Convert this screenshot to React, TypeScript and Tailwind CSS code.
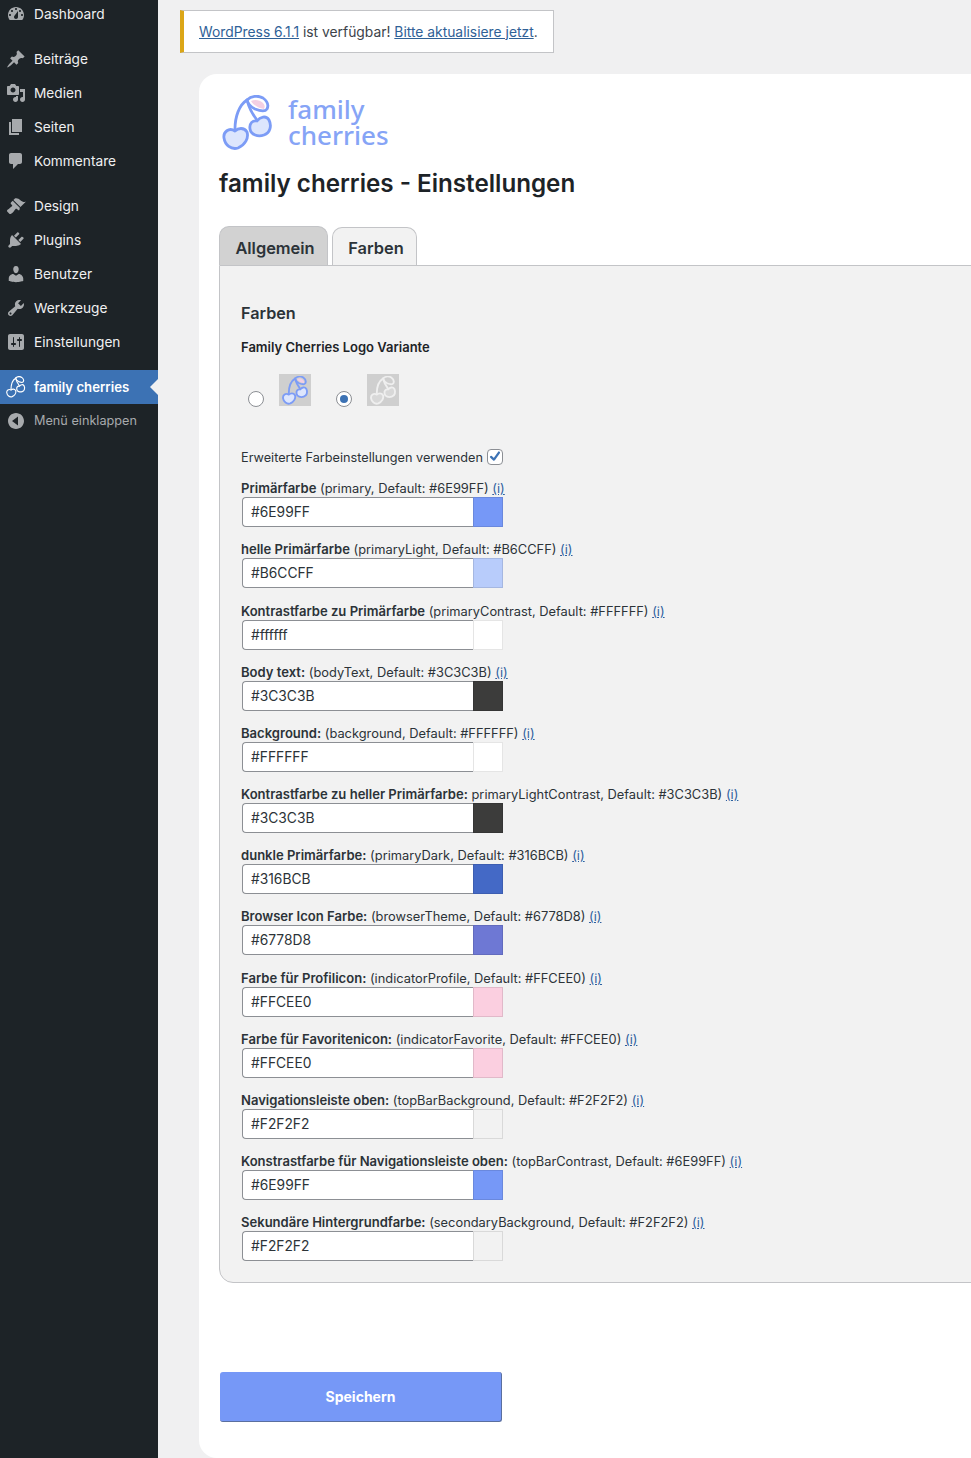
import React from "react";

const iconPaths: Record<string, string> = {
  dashboard: "M3.76 16h12.48c1.1-1.37 1.76-3.11 1.76-5 0-4.42-3.58-8-8-8s-8 3.58-8 8c0 1.89.66 3.63 1.76 5zM10 4c.55 0 1 .45 1 1s-.45 1-1 1-1-.45-1-1 .45-1 1-1zM6 6c.55 0 1 .45 1 1s-.45 1-1 1-1-.45-1-1 .45-1 1-1zm8 0c.55 0 1 .45 1 1s-.45 1-1 1-1-.45-1-1 .45-1 1-1zm-5.37 5.55L12 7v6c0 1.1-.9 2-2 2s-2-.9-2-2c0-.57.24-1.08.63-1.45zM4 10c.55 0 1 .45 1 1s-.45 1-1 1-1-.45-1-1 .45-1 1-1zm12 0c.55 0 1 .45 1 1s-.45 1-1 1-1-.45-1-1 .45-1 1-1z",
  post: "M10.44 3.02l1.82-1.82 6.36 6.35-1.83 1.82c-1.05-.68-2.48-.57-3.41.36l-.75.75c-.92.93-1.04 2.35-.35 3.41l-1.83 1.82-2.41-2.41-2.8 2.79c-.42.42-3.38 2.71-3.8 2.29s1.86-3.39 2.28-3.81l2.79-2.79L4.1 9.36l1.83-1.82c1.05.69 2.48.57 3.4-.36l.75-.75c.93-.92 1.05-2.35.36-3.41z",
  media: "M13 11V4c0-.55-.45-1-1-1h-1.67L9 1H5L3.67 3H2c-.55 0-1 .45-1 1v7c0 .55.45 1 1 1h10c.55 0 1-.45 1-1zM7 4.5c1.38 0 2.5 1.12 2.5 2.5S8.38 9.5 7 9.5 4.5 8.38 4.5 7 5.62 4.5 7 4.5zM14 6h5v10.5c0 1.38-1.12 2.5-2.5 2.5S14 17.88 14 16.5s1.12-2.5 2.5-2.5c.17 0 .34.02.5.05V9h-3V6zm-4 8.05V13h2v3.5c0 1.38-1.12 2.5-2.5 2.5S7 17.88 7 16.5 8.12 14 9.5 14c.17 0 .34.02.5.05z",
  page: "M6 15V2h10v13H6zm-1 1h8v2H3V5h2v11z",
  comments: "M5 2h9c1.1 0 2 .9 2 2v7c0 1.1-.9 2-2 2h-2l-5 5v-5H5c-1.1 0-2-.9-2-2V4c0-1.1.9-2 2-2z",
  design: "M14.48 11.06L7.41 3.99l1.5-1.5c.5-.56 2.3-.47 3.51.32 1.21.8 1.43 1.28 2.91 2.1 1.18.64 2.45 1.26 4.45.85zm-.71.71L6.7 4.7 4.93 6.47c-.39.39-.39 1.02 0 1.41l1.06 1.06c.39.39.39 1.03 0 1.42-.6.6-1.43 1.11-2.21 1.69-.35.26-.7.53-1.01.84C1.43 13.23.4 14.81 1.2 15.6l2.12 2.12c.79.8 2.37-.23 3.71-1.57.31-.31.58-.66.84-1.01.58-.78 1.09-1.61 1.69-2.21.39-.39 1.03-.39 1.42 0l1.06 1.06c.39.39 1.02.39 1.41 0z",
  plugins: "M13.11 4.36L9.87 7.6 8 5.73l3.24-3.24c.35-.34 1.05-.2 1.56.32.52.51.66 1.21.31 1.55zm-8 1.77l.91-1.12 9.01 9.01-1.19.84c-.71.71-2.63 1.16-3.82 1.16H6.14L4.9 17.26c-.59.59-1.54.59-2.12 0-.59-.58-.59-1.53 0-2.12l1.24-1.24v-3.88c0-1.13.4-3.19 1.09-3.89zm7.26 3.97l3.24-3.24c.34-.35 1.04-.21 1.55.31.52.51.66 1.21.31 1.55l-3.24 3.25z",
  users: "M10 9.25c-2.27 0-2.73-3.44-2.73-3.44C7 4.02 7.82 2 9.97 2c2.16 0 2.98 2.02 2.71 3.81 0 0-.41 3.44-2.68 3.44zm0 2.57L12.72 10c2.39 0 4.52 2.33 4.52 4.53v2.49s-3.65 1.13-7.24 1.13c-3.65 0-7.24-1.13-7.24-1.13v-2.49c0-2.25 1.94-4.48 4.47-4.48z",
  tools: "M16.68 9.77c-1.34 1.34-3.3 1.67-4.95.99l-5.41 6.52c-.99.99-2.59.99-3.58 0s-.99-2.59 0-3.57l6.52-5.42c-.68-1.65-.35-3.61.99-4.95 1.28-1.28 3.12-1.62 4.72-1.06l-2.89 2.89 2.82 2.82 2.86-2.87c.53 1.58.18 3.39-1.08 4.65zM3.81 16.21c.4.39 1.04.39 1.43 0 .4-.4.4-1.04 0-1.43-.39-.4-1.03-.4-1.43 0-.39.39-.39 1.03 0 1.43z",
  settings: "M18 16V4c0-1.1-.9-2-2-2H4c-1.1 0-2 .9-2 2v12c0 1.1.9 2 2 2h12c1.1 0 2-.9 2-2zM8 11h1c.55 0 1 .45 1 1s-.45 1-1 1H8v1.5c0 .28-.22.5-.5.5s-.5-.22-.5-.5V13H6c-.55 0-1-.45-1-1s.45-1 1-1h1V5.5c0-.28.22-.5.5-.5s.5.22.5.5V11zm5-2h-1c-.55 0-1-.45-1-1s.45-1 1-1h1V5.5c0-.28.22-.5.5-.5s.5.22.5.5V7h1c.55 0 1 .45 1 1s-.45 1-1 1h-1v5.5c0 .28-.22.5-.5.5s-.5-.22-.5-.5V9z",
  collapse: "M18 10c0-4.42-3.58-8-8-8s-8 3.58-8 8 3.58 8 8 8 8-3.58 8-8zm-6 4.5L6 10l6-4.5v9z",
};

function Dashicon({ name }: { name: string }) {
  return (
    <svg viewBox="0 0 20 20" className="w-5 h-5 shrink-0 text-[#a7aaad]" fill="currentColor" fillRule="evenodd" aria-hidden="true">
      <path d={iconPaths[name]} />
    </svg>
  );
}

function Cherry({ stroke, leaf, fill, width, className }: { stroke: string; leaf: string; fill: string; width: number; className: string }) {
  return (
    <svg viewBox="0 0 52 56" className={className} fill="none" stroke={stroke} strokeWidth={width} strokeLinecap="round" strokeLinejoin="round" aria-hidden="true">
      <path d="M13 34 C13 22 17 10 25 5" />
      <path d="M25 5 C27 13 31 20 35 25" />
      <path d="M25 5 C29 1 36 0 41 3 C45 6 47 10 45 14 C43 17 38 16 33 14 C29 12 26 9 25 5 Z" />
      <path d="M29 6 C33 4 38 5 41 8 C43 10 43 12 42 14 C38 14 32 11 29 6 Z" fill={leaf} stroke="none" />
      <path d="M13 36 C16 33 22 32 25 37 C27 43 23 50 16 53 C9 55 3 50 2 43 C1 37 7 32 13 36 Z" fill={fill} />
      <path d="M35 26 C38 22 44 20 47 25 C50 31 48 38 42 40 C36 42 29 40 28 34 C27 28 31 25 35 26 Z" fill={fill} />
    </svg>
  );
}

function NavItem({ icon, label }: { icon: string; label: string }) {
  return (
    <div className="h-[34px] flex items-center gap-[8px] pl-[6px] text-[13.7px] text-[#f0f0f1]">
      <Dashicon name={icon} />
      <span>{label}</span>
    </div>
  );
}

const rows = [
  { bold: "Primärfarbe", rest: "(primary, Default: #6E99FF)", value: "#6E99FF", color: "#7698f7", gap: "mt-[13px]" },
  { bold: "helle Primärfarbe", rest: "(primaryLight, Default: #B6CCFF)", value: "#B6CCFF", color: "#b8ccfb", gap: "mt-[14px]" },
  { bold: "Kontrastfarbe zu Primärfarbe", rest: "(primaryContrast, Default: #FFFFFF)", value: "#ffffff", color: "#ffffff", gap: "mt-[15px]" },
  { bold: "Body text:", rest: "(bodyText, Default: #3C3C3B)", value: "#3C3C3B", color: "#3c3c3b", gap: "mt-[14px]" },
  { bold: "Background:", rest: "(background, Default: #FFFFFF)", value: "#FFFFFF", color: "#ffffff", gap: "mt-[14px]" },
  { bold: "Kontrastfarbe zu heller Primärfarbe:", rest: "primaryLightContrast, Default: #3C3C3B)", value: "#3C3C3B", color: "#3c3c3b", gap: "mt-[14px]" },
  { bold: "dunkle Primärfarbe:", rest: "(primaryDark, Default: #316BCB)", value: "#316BCB", color: "#4469c6", gap: "mt-[14px]" },
  { bold: "Browser Icon Farbe:", rest: "(browserTheme, Default: #6778D8)", value: "#6778D8", color: "#6e78d4", gap: "mt-[14px]" },
  { bold: "Farbe für Profilicon:", rest: "(indicatorProfile, Default: #FFCEE0)", value: "#FFCEE0", color: "#fbcfe0", gap: "mt-[15px]" },
  { bold: "Farbe für Favoritenicon:", rest: "(indicatorFavorite, Default: #FFCEE0)", value: "#FFCEE0", color: "#fbcfe0", gap: "mt-[14px]" },
  { bold: "Navigationsleiste oben:", rest: "(topBarBackground, Default: #F2F2F2)", value: "#F2F2F2", color: "#f2f2f2", gap: "mt-[14px]" },
  { bold: "Konstrastfarbe für Navigationsleiste oben:", rest: "(topBarContrast, Default: #6E99FF)", value: "#6E99FF", color: "#7698f7", gap: "mt-[14px]" },
  { bold: "Sekundäre Hintergrundfarbe:", rest: "(secondaryBackground, Default: #F2F2F2)", value: "#F2F2F2", color: "#f2f2f2", gap: "mt-[14px]" },
];

function ColorRow({ row }: { row: (typeof rows)[number] }) {
  return (
    <div className={row.gap}>
      <div className="h-[17px] leading-[17px] text-[12.85px] text-[#2c3338] whitespace-nowrap">
        <span className="font-semibold text-[13.05px]">{row.bold}</span> {row.rest}{" "}
        <span className="text-[#2f5f9f] underline">(i)</span>
      </div>
      <div className="flex ml-[1px] w-[261px] h-[30px]">
        <div className="w-[231px] bg-white border border-[#8c8f94] border-r-0 rounded-l-[4px] pl-[8px] pt-[1px] flex items-center text-[13.8px] text-[#2c3338]">
          {row.value}
        </div>
        <div className="w-[30px] border border-black/10" style={{ backgroundColor: row.color }} />
      </div>
    </div>
  );
}

export default function App() {
  return (
    <div className="w-[971px] h-[1458px] overflow-hidden flex bg-[#f0f0f1] font-['Inter','Liberation_Sans',sans-serif]">
      <aside className="w-[158px] shrink-0 bg-[#1d2327] flex flex-col">
        <div className="-mt-[3px]">
          <NavItem icon="dashboard" label="Dashboard" />
        </div>
        <div className="mt-[11px]">
          <NavItem icon="post" label="Beiträge" />
          <NavItem icon="media" label="Medien" />
          <NavItem icon="page" label="Seiten" />
          <NavItem icon="comments" label="Kommentare" />
        </div>
        <div className="mt-[11px]">
          <NavItem icon="design" label="Design" />
          <NavItem icon="plugins" label="Plugins" />
          <NavItem icon="users" label="Benutzer" />
          <NavItem icon="tools" label="Werkzeuge" />
          <NavItem icon="settings" label="Einstellungen" />
        </div>
        <div className="relative mt-[11px] h-[34px] bg-[#3c72b4] flex items-center gap-[8px] pl-[6px] text-[13.2px] font-semibold text-white">
          <Cherry stroke="#ffffff" leaf="#3c72b4" fill="none" width={3} className="w-[20px] h-[22px] shrink-0" />
          <span className="pt-[2px]">family cherries</span>
          <div className="absolute right-0 top-[9px] w-0 h-0 border-y-[8px] border-y-transparent border-r-[8px] border-r-[#f0f0f1]" />
        </div>
        <div className="h-[34px] flex items-center gap-[8px] pl-[6px] text-[12.7px] text-[#a7aaad]">
          <Dashicon name="collapse" />
          <span>Menü einklappen</span>
        </div>
      </aside>

      <main className="flex-1 min-w-0 pl-[22px] pt-[10px]">
        <div className="w-[374px] h-[43px] pt-[1px] bg-white border border-[#c3c4c7] border-l-4 border-l-[#dba617] flex items-center pl-[15px] text-[13.85px] text-[#3c434a] whitespace-nowrap">
          <span className="text-[#2f6197] underline">WordPress 6.1.1</span>
          <span>&nbsp;ist verfügbar!&nbsp;</span>
          <span className="text-[#2f6197] underline">Bitte aktualisiere jetzt</span>
          <span>.</span>
        </div>

        <section className="mt-[21px] ml-[19px] w-[900px] h-[1384px] bg-white rounded-l-[18px] pl-[20px] pt-[21px]">
          <div className="flex items-start pl-[3px]">
            <Cherry stroke="#7c9cf6" leaf="#f3cfe3" fill="#dde6fd" width={2.8} className="w-[52px] h-[56px] shrink-0" />
            <div className="ml-[14px] mt-[1px] font-['Noto_Sans',sans-serif] text-[26px] leading-[26px] font-medium text-[#86a4f6]">
              <div>family</div>
              <div>cherries</div>
            </div>
          </div>

          <h1 className="mt-[17px] text-[24.2px] leading-[32px] font-semibold text-[#1d2327] whitespace-nowrap">family cherries - Einstellungen</h1>

          <div className="mt-[26px] flex items-end gap-[4px] h-[39px]">
            <div className="w-[109px] h-[39px] pt-[4px] pl-[3px] bg-[#d2d2d2] border border-[#c3c4c7] border-b-0 rounded-t-[10px] flex items-center justify-center text-[16.4px] font-semibold text-[#2c3338]">
              Allgemein
            </div>
            <div className="w-[85px] h-[38px] pt-[4px] pl-[3px] bg-[#f2f2f2] border border-[#c3c4c7] border-b-0 rounded-t-[10px] flex items-center justify-center text-[16.4px] font-semibold text-[#2c3338]">
              Farben
            </div>
          </div>

          <div className="w-[860px] h-[1018px] bg-[#f2f2f2] border border-[#c3c4c7] rounded-bl-[14px] pl-[21px] pt-[36px]">
            <h2 className="text-[16.2px] leading-[22px] font-semibold text-[#2c3338]">Farben</h2>
            <div className="mt-[15px] text-[13px] leading-[17px] font-semibold text-[#1d2327]">Family Cherries Logo Variante</div>

            <div className="mt-[18px] flex items-start h-[34px]">
              <div className="ml-[7px] mt-[17px] w-[16px] h-[16px] rounded-full bg-white border border-[#8c8f94]" />
              <div className="ml-[15px] w-[32px] h-[32px] bg-[#cfcfcf] flex items-center justify-center">
                <Cherry stroke="#7c9cf6" leaf="#f3cfe3" fill="#dde6fd" width={3.6} className="w-[27px] h-[29px]" />
              </div>
              <div className="ml-[25px] mt-[17px] w-[16px] h-[16px] rounded-full bg-white border border-[#8c8f94] flex items-center justify-center">
                <div className="w-[8px] h-[8px] rounded-full bg-[#3c72b4]" />
              </div>
              <div className="ml-[15px] w-[32px] h-[32px] bg-[#cfcfcf] flex items-center justify-center">
                <Cherry stroke="#efefef" leaf="#cfcfcf" fill="#d8d8d8" width={3.6} className="w-[27px] h-[29px]" />
              </div>
            </div>

            <div className="mt-[41px] flex items-center h-[18px] text-[12.7px] text-[#2c3338]">
              <span>Erweiterte Farbeinstellungen verwenden</span>
              <span className="ml-[4px] -mt-[3px] w-[16px] h-[16px] rounded-[4px] bg-white border border-[#8c8f94] flex items-center justify-center">
                <svg viewBox="0 0 16 16" className="w-[15px] h-[15px]" fill="none" stroke="#3c72b4" strokeWidth="2.6" strokeLinecap="round" strokeLinejoin="round" aria-hidden="true">
                  <path d="M3.5 8.5 L6.8 11.5 L12.5 3.5" />
                </svg>
              </span>
            </div>

            {rows.map((r) => (
              <ColorRow key={r.bold + r.rest} row={r} />
            ))}
          </div>

          <button className="mt-[89px] ml-[1px] w-[282px] h-[50px] bg-[#7698f7] border-b border-r border-[#5a6f9f] rounded-[3px] text-[14px] font-bold text-white">
            Speichern
          </button>
        </section>
      </main>
    </div>
  );
}
